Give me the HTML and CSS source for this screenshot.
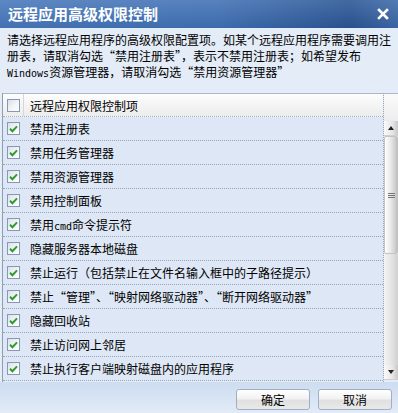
FILE: index.html
```html
<!DOCTYPE html>
<html lang="zh-CN">
<head>
  <meta charset="UTF-8" />
  <title>远程应用高级权限控制</title>
  <link rel="stylesheet" href="styles.css">
</head>
<body>
  <div class="dialog">
    <div class="titlebar">
      <span class="title">远程应用高级权限控制</span>
      <svg class="close" width="12" height="12" viewBox="0 0 12 12"><path d="M2 2 L10 10 M10 2 L2 10" stroke="#fff" stroke-width="2.6" stroke-linecap="square"/></svg>
    </div>

    <p class="desc">请选择远程应用程序的高级权限配置项。如某个远程应用程序需要调用注<br>册表，请取消勾选“禁用注册表”，表示不禁用注册表；如希望发布<br><span class="en">Windows</span>资源管理器，请取消勾选“禁用资源管理器”</p>

    <div class="list">
      <div class="grid">
        <div class="row head">
          <span class="cell-check"><span class="box"></span></span>
          <span class="cell-text">远程应用权限控制项</span>
        </div>
        <div class="row"><span class="cell-check"><span class="box on"></span></span><span class="cell-text">禁用注册表</span></div>
        <div class="row"><span class="cell-check"><span class="box on"></span></span><span class="cell-text">禁用任务管理器</span></div>
        <div class="row"><span class="cell-check"><span class="box on"></span></span><span class="cell-text">禁用资源管理器</span></div>
        <div class="row"><span class="cell-check"><span class="box on"></span></span><span class="cell-text">禁用控制面板</span></div>
        <div class="row"><span class="cell-check"><span class="box on"></span></span><span class="cell-text">禁用<span class="en">cmd</span>命令提示符</span></div>
        <div class="row"><span class="cell-check"><span class="box on"></span></span><span class="cell-text">隐藏服务器本地磁盘</span></div>
        <div class="row"><span class="cell-check"><span class="box on"></span></span><span class="cell-text">禁止运行（包括禁止在文件名输入框中的子路径提示）</span></div>
        <div class="row"><span class="cell-check"><span class="box on"></span></span><span class="cell-text">禁止“管理”、“映射网络驱动器”、“断开网络驱动器”</span></div>
        <div class="row"><span class="cell-check"><span class="box on"></span></span><span class="cell-text">隐藏回收站</span></div>
        <div class="row"><span class="cell-check"><span class="box on"></span></span><span class="cell-text">禁止访问网上邻居</span></div>
        <div class="row"><span class="cell-check"><span class="box on"></span></span><span class="cell-text">禁止执行客户端映射磁盘内的应用程序</span></div>
      </div>
      <div class="side">
        <div class="side-head"></div>
        <div class="scrollbar">
          <div class="sb-btn"><span class="arrow up"></span></div>
          <div class="sb-thumb"><span class="grip"></span></div>
          <div class="sb-track"></div>
          <div class="sb-btn"><span class="arrow down"></span></div>
        </div>
      </div>
    </div>

    <div class="footer">
      <button class="btn">确定</button>
      <button class="btn">取消</button>
    </div>
  </div>

  <script>
    // check mark for every ticked box
    document.querySelectorAll('.box.on').forEach(function (b) {
      b.innerHTML = '<svg width="9" height="8" viewBox="0 0 9 8"><path d="M1 3.8 L3.4 6.2 L8 1.4" fill="none" stroke="#2f9a2f" stroke-width="2"/></svg>';
    });
  </script>
</body>
</html>
```

FILE: styles.css
```css
:root {
  --fundo: #e4ecf7;
  --linha: #dde7f5;
  --borda: #8c9db6;
  --texto: #000;
}

* {
  box-sizing: border-box;
  margin: 0;
  padding: 0;
}

body {
  font-family: "Noto Sans CJK SC", "Noto Sans", sans-serif;
  font-size: 12px;
  color: var(--texto);
  background: var(--fundo);
}

.dialog {
  width: 398px;
  height: 413px;
  display: flex;
  flex-direction: column;
  background: var(--fundo);
}

.titlebar {
  height: 28px;
  display: flex;
  align-items: center;
  justify-content: space-between;
  padding: 0 8px 0 8px;
  background:
    linear-gradient(to bottom, rgba(255,255,255,0.12), rgba(0,0,0,0.05)),
    linear-gradient(to right, #4677bb 0%, #3f70b4 55%, #2f5c9c 80%, #2a5594 88%, #3c69a9 100%);
}

.title {
  color: #fff;
  font-size: 15px;
  font-weight: bold;
  letter-spacing: 0;
  line-height: 28px;
}

.close {
  margin-right: 1px;
}

.desc {
  padding: 4px 0 0 7px;
  line-height: 16px;
  white-space: nowrap;
}

.en {
  font-family: "DejaVu Sans Mono", "Liberation Mono", monospace;
  font-size: 10px;
}

.list {
  margin: 11px 0 0 2px;
  display: flex;
  height: 289px;
}

.grid {
  flex: 1;
  border-left: 1px solid var(--borda);
  border-right: 1px dotted #9aa6b8;
}

.row {
  height: 24px;
  display: flex;
  align-items: center;
  background: var(--linha);
  border-bottom: 1px dotted #9ba5b3;
}

.row.head {
  height: 24px;
  background: linear-gradient(to bottom, #fdfdfd, #ececec);
  border-top: 1px solid #a9b8cc;
  border-bottom: 1px dotted #a5acb6;
}

.cell-check {
  width: 21px;
  height: 100%;
  display: flex;
  align-items: center;
  padding-left: 4px;
}

.row.head .cell-check {
  border-right: 1px solid #d6d6d6;
}

.cell-text {
  padding-left: 6px;
  white-space: nowrap;
}

.box {
  width: 13px;
  height: 13px;
  border: 1px solid #8499b5;
  background: linear-gradient(135deg, #dadfe6 0%, #f2f3f5 50%, #ffffff 100%);
  display: flex;
  align-items: center;
  justify-content: center;
}

.side {
  width: 14px;
  display: flex;
  flex-direction: column;
}

.side-head {
  height: 28px;
  background: linear-gradient(to bottom, #fbfbfb, #eeeeee);
  border-top: 1px solid #a9b8cc;
  border-bottom: 1px solid #e4ecf7;
}

.scrollbar {
  flex: 1;
  display: flex;
  flex-direction: column;
  padding-bottom: 2px;
}

.sb-btn {
  height: 15px;
  display: flex;
  align-items: center;
  justify-content: center;
  background: linear-gradient(to right, #fafafa, #e6e6e6 60%, #c8c8c8);
  border-bottom: 1px solid #d0d0d0;
}

.arrow {
  width: 0;
  height: 0;
  border-left: 3px solid transparent;
  border-right: 3px solid transparent;
}

.arrow.up {
  border-bottom: 4px solid #222;
}

.arrow.down {
  border-top: 4px solid #222;
}

.sb-thumb {
  height: 118px;
  display: flex;
  align-items: center;
  justify-content: center;
  background: linear-gradient(to right, #ffffff, #eaeaea 45%, #cfcfcf 85%, #bdbdbd);
  border: 1px solid #c4c4c4;
  border-radius: 2px;
}

.grip {
  width: 7px;
  height: 5px;
  border-top: 1px solid #777;
  border-bottom: 1px solid #777;
  position: relative;
}

.grip::after {
  content: "";
  display: block;
  margin-top: 1px;
  border-top: 1px solid #777;
}

.sb-track {
  flex: 1;
  background: linear-gradient(to right, #f4f4f4, #e2e2e2 60%, #d0d0d0);
}

.footer {
  flex: 1;
  display: flex;
  justify-content: flex-end;
  align-items: flex-start;
  gap: 8px;
  padding: 7px 6px 0 0;
  background: linear-gradient(to bottom, #cddcf0, #e2ebf7);
}

.btn {
  width: 74px;
  height: 21px;
  font-family: "Noto Sans CJK SC", sans-serif;
  font-size: 12px;
  color: #000;
  border: 1px solid #9fb0c6;
  border-radius: 3px;
  background: linear-gradient(to bottom, #ffffff 0%, #f2f2f2 45%, #e0e0e0 55%, #e9e9e9 100%);
  cursor: pointer;
}
```
